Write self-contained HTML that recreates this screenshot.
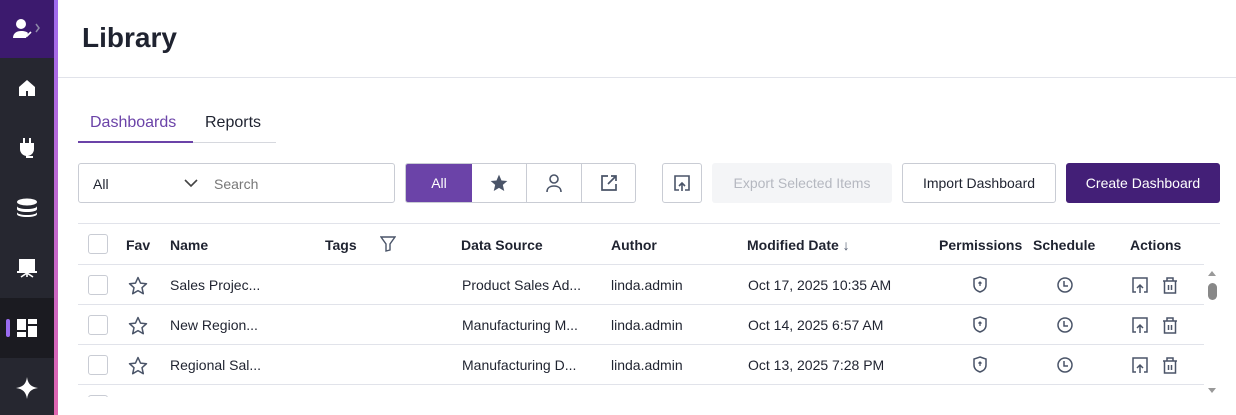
<!DOCTYPE html><html><head><style>
*{box-sizing:border-box;margin:0;padding:0}
body{width:1236px;height:415px;overflow:hidden;background:#fff;font-family:"Liberation Sans",sans-serif;color:#1f2330;position:relative}
.sb{position:absolute;left:0;top:0;width:54px;height:415px;background:#262730}
.strip{position:absolute;left:54px;top:0;width:4px;height:415px;background:linear-gradient(#a06cf0,#e066b0)}
.ic{position:absolute;left:0;width:54px;display:flex;justify-content:center;align-items:center}
.a{position:absolute;white-space:nowrap}
.hd{font-weight:bold;font-size:14px;top:237px}
.cell{font-size:14px}
.line{position:absolute;left:78px;width:1142px;height:1px;background:#e1e3ea}
.cb{position:absolute;left:88px;width:20px;height:20px;border:1px solid #c9ccd4;border-radius:3px;background:#fff}
</style></head><body>
<div class="sb"></div>
<div class="ic" style="top:0;height:58px;background:#3c1a6e">
<svg width="30" height="24" viewBox="0 0 30 24"><circle cx="9" cy="7" r="5" fill="#fff"/><path d="M1 21c0-5 4-7 8-7s6 1 7 2l-2 5z" fill="#fff"/><path d="M13 17l2 2 4-4" stroke="#fff" stroke-width="1.6" fill="none"/><path d="M24 7l3 4-3 4" stroke="#8d88a8" stroke-width="1.5" fill="none"/></svg></div>
<div class="ic" style="top:68px;height:40px"><svg width="20" height="20" viewBox="0 0 20 20"><path d="M2 9l8-7 8 7v9H2z" fill="#fff"/><rect x="9" y="13" width="2" height="5" fill="#262730"/></svg></div>
<div class="ic" style="top:128px;height:40px"><svg width="20" height="22" viewBox="0 0 20 22"><rect x="6" y="1" width="2" height="5" fill="#fff"/><rect x="12" y="1" width="2" height="5" fill="#fff"/><path d="M3 6h14v6a7 7 0 0 1-14 0z" fill="#fff"/><rect x="9" y="16" width="2" height="5" fill="#fff"/><rect x="9" y="19" width="7" height="2" fill="#fff"/></svg></div>
<div class="ic" style="top:188px;height:40px"><svg width="22" height="20" viewBox="0 0 22 20"><ellipse cx="11" cy="4" rx="10" ry="3.5" fill="#fff"/><path d="M1 8c0 4 20 4 20 0v3c0 4-20 4-20 0z" fill="#fff"/><path d="M1 14c0 4 20 4 20 0v2c0 4-20 4-20 0z" fill="#fff"/></svg></div>
<div class="ic" style="top:248px;height:40px"><svg width="22" height="20" viewBox="0 0 22 20"><rect x="3" y="1" width="16" height="12" fill="#fff"/><rect x="1" y="13" width="20" height="2" fill="#fff"/><path d="M11 15l-6 4M11 15l6 4M11 15v4" stroke="#fff" stroke-width="1.6"/></svg></div>
<div class="ic" style="top:298px;height:60px;background:#1b1b21"><div style="position:absolute;left:6px;top:21px;width:4px;height:18px;border-radius:2px;background:#9a6cf0"></div><svg width="22" height="20" viewBox="0 0 22 20"><rect x="1" y="1" width="9" height="11" fill="#fff"/><rect x="1" y="14" width="9" height="5" fill="#fff"/><rect x="12" y="1" width="9" height="5" fill="#fff"/><rect x="12" y="8" width="9" height="11" fill="#fff"/></svg></div>
<div class="ic" style="top:368px;height:40px"><svg width="24" height="24" viewBox="0 0 24 24"><path d="M12 1C13 8 16 11 23 12C16 13 13 16 12 23C11 16 8 13 1 12C8 11 11 8 12 1z" fill="#fff"/></svg></div>
<div class="strip"></div>

<div class="a" style="left:82px;top:22px;font-size:28px;font-weight:bold;color:#1f2330">Library</div>
<div style="position:absolute;left:58px;top:77px;width:1178px;height:1px;background:#e1e3ea"></div>
<div class="a" style="left:90px;top:114px;font-size:16px;color:#6b43a8">Dashboards</div>
<div class="a" style="left:205px;top:114px;font-size:16px;color:#1f2330">Reports</div>
<div style="position:absolute;left:78px;top:142px;width:198px;height:1px;background:#d6d8de"></div>
<div style="position:absolute;left:78px;top:141px;width:115px;height:2px;background:#6b43a8"></div>

<div style="position:absolute;left:78px;top:163px;width:317px;height:40px;border:1px solid #c9ccd4;border-radius:3px"></div>
<div class="a" style="left:93px;top:176px;font-size:14px">All</div>
<svg class="a" style="left:184px;top:178px" width="14" height="10"><path d="M1 2l6 6 6-6" stroke="#444" stroke-width="1.6" fill="none"/></svg>
<div class="a" style="left:214px;top:176px;font-size:14px;color:#777">Search</div>

<div style="position:absolute;left:405px;top:163px;width:231px;height:40px;border:1px solid #c9ccd4;border-radius:3px;display:flex;overflow:hidden">
<div style="width:66px;background:#6b43a8;color:#fff;font-size:14px;display:flex;align-items:center;justify-content:center">All</div>
<div style="width:55px;border-right:1px solid #c9ccd4;display:flex;align-items:center;justify-content:center"><svg width="20" height="20" viewBox="0 0 24 24"><path d="M12 2l3 7 7 .6-5.4 4.7 1.7 7.3L12 17.8 5.7 21.6l1.7-7.3L2 9.6 9 9z" fill="#4a5468"/></svg></div>
<div style="width:55px;border-right:1px solid #c9ccd4;display:flex;align-items:center;justify-content:center"><svg width="18" height="20" viewBox="0 0 18 20"><circle cx="9" cy="6" r="4" stroke="#4a5468" stroke-width="1.6" fill="none"/><path d="M2 19c0-4 3-6 7-6s7 2 7 6" stroke="#4a5468" stroke-width="1.6" fill="none"/></svg></div>
<div style="flex:1;display:flex;align-items:center;justify-content:center"><svg width="18" height="18" viewBox="0 0 18 18"><path d="M8 2H2v14h14v-6M11 2h5v5M16 2l-8 8" stroke="#4a5468" stroke-width="1.7" fill="none"/></svg></div></div>

<div style="position:absolute;left:662px;top:163px;width:40px;height:40px;border:1px solid #c9ccd4;border-radius:3px;display:flex;align-items:center;justify-content:center"><svg width="18" height="18" viewBox="0 0 18 18"><path d="M6 16H2V2h14v14h-4M9 17V9M6 12l3-3 3 3" stroke="#4a5468" stroke-width="1.6" fill="none"/></svg></div>
<div style="position:absolute;left:712px;top:163px;width:180px;height:40px;background:#f4f5f7;border-radius:3px;color:#b5b8c0;font-size:14px;display:flex;align-items:center;justify-content:center">Export Selected Items</div>
<div style="position:absolute;left:902px;top:163px;width:154px;height:40px;border:1px solid #c9ccd4;border-radius:3px;font-size:14px;display:flex;align-items:center;justify-content:center">Import Dashboard</div>
<div style="position:absolute;left:1066px;top:163px;width:154px;height:40px;background:#431f77;border-radius:3px;color:#fff;font-size:14px;display:flex;align-items:center;justify-content:center">Create Dashboard</div>

<div class="line" style="top:223px"></div>
<div class="cb" style="top:234px"></div>
<div class="a hd" style="left:126px">Fav</div>
<div class="a hd" style="left:170px">Name</div>
<div class="a hd" style="left:325px">Tags</div>
<svg class="a" style="left:380px;top:236px" width="16" height="16" viewBox="0 0 16 16"><path d="M1 1h14l-5 7v6l-4 1V8z" stroke="#4a5468" stroke-width="1.4" fill="none"/></svg>
<div class="a hd" style="left:461px">Data Source</div>
<div class="a hd" style="left:611px">Author</div>
<div class="a hd" style="left:747px">Modified Date <span style="font-weight:normal;color:#4a5468">&#8595;</span></div>
<div class="a hd" style="left:939px">Permissions</div>
<div class="a hd" style="left:1033px">Schedule</div>
<div class="a hd" style="left:1130px">Actions</div>
<div class="line" style="top:264px;width:1126px"></div>

<div class="cb" style="top:275px"></div><div class="cb" style="top:315px"></div><div class="cb" style="top:355px"></div><div class="cb" style="top:395px"></div>
<div class="line" style="top:304px;width:1126px"></div><div class="line" style="top:344px;width:1126px"></div><div class="line" style="top:384px;width:1126px"></div>

<div class="a cell" style="left:170px;top:277px">Sales Projec...</div><div class="a cell" style="left:462px;top:277px">Product Sales Ad...</div><div class="a cell" style="left:611px;top:277px">linda.admin</div><div class="a cell" style="left:748px;top:277px">Oct 17, 2025 10:35 AM</div>
<div class="a cell" style="left:170px;top:317px">New Region...</div><div class="a cell" style="left:462px;top:317px">Manufacturing M...</div><div class="a cell" style="left:611px;top:317px">linda.admin</div><div class="a cell" style="left:748px;top:317px">Oct 14, 2025 6:57 AM</div>
<div class="a cell" style="left:170px;top:357px">Regional Sal...</div><div class="a cell" style="left:462px;top:357px">Manufacturing D...</div><div class="a cell" style="left:611px;top:357px">linda.admin</div><div class="a cell" style="left:748px;top:357px">Oct 13, 2025 7:28 PM</div>

<div style="position:absolute;left:58px;top:397px;width:1178px;height:18px;background:#fff"></div>

<svg class="a" style="left:0;top:0" width="1236" height="415">
<defs>
<g id="st"><path d="M10 1.5l2.5 5.6 6 .6-4.5 4 1.3 6L10 14.6 4.7 17.7 6 11.7 1.5 7.7l6-.6z" stroke="#4a5468" stroke-width="1.5" fill="none" stroke-linejoin="round"/></g>
<g id="sh"><path d="M8 1l6 2v6c0 4-3 6-6 7-3-1-6-3-6-7V3z" stroke="#4a5468" stroke-width="1.5" fill="none"/><path d="M8 6v4M6.5 7.5L8 6l1.5 1.5" stroke="#4a5468" stroke-width="1.3" fill="none"/></g>
<g id="ck"><circle cx="8" cy="8" r="7" stroke="#4a5468" stroke-width="1.5" fill="none"/><path d="M7 4v5h4" stroke="#4a5468" stroke-width="1.5" fill="none"/></g>
<g id="ex"><path d="M5 16H2V2h14v14h-3M9 17V9M6 12l3-3 3 3" stroke="#4a5468" stroke-width="1.5" fill="none"/></g>
<g id="tr"><path d="M2 5h14M6 5V2h6v3M3.5 5v12h11V5M7.5 9v5M10.5 9v5" stroke="#4a5468" stroke-width="1.5" fill="none"/></g>
</defs>
<use href="#st" x="128" y="276"/><use href="#st" x="128" y="316"/><use href="#st" x="128" y="356"/>
<use href="#sh" x="972" y="276"/><use href="#sh" x="972" y="316"/><use href="#sh" x="972" y="356"/>
<use href="#ck" x="1057" y="277"/><use href="#ck" x="1057" y="317"/><use href="#ck" x="1057" y="357"/>
<use href="#ex" x="1131" y="276"/><use href="#ex" x="1131" y="316"/><use href="#ex" x="1131" y="356"/>
<use href="#tr" x="1161" y="276"/><use href="#tr" x="1161" y="316"/><use href="#tr" x="1161" y="356"/>
<path d="M1208 276l4-5 4 5z" fill="#999"/><rect x="1208" y="283" width="9" height="17" rx="4.5" fill="#888"/><path d="M1208 388l4 5 4-5z" fill="#999"/>
</svg>
</body></html>
